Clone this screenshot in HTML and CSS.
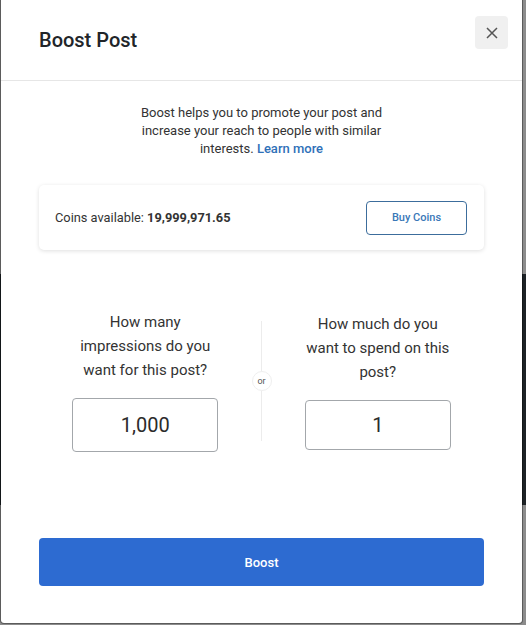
FILE: index.html
```html
<!DOCTYPE html>
<html lang="en">
<head>
<meta charset="utf-8">
<title>Boost Post</title>
<link rel="stylesheet" href="styles.css">
</head>
<body>
<div class="modal">
  <header class="modal-header">
    <h1 class="modal-title">Boost Post</h1>
    <button class="close-btn" aria-label="Close">
      <svg width="12" height="12" viewBox="0 0 12 12"><path d="M1 1 L11 11 M11 1 L1 11" stroke="#555" stroke-width="1.5" fill="none"/></svg>
    </button>
  </header>
  <div class="modal-body">
    <p class="intro">Boost helps you to promote your post and increase your reach to people with similar interests. <a href="#" class="link">Learn more</a></p>
    <div class="coins-card">
      <span class="coins-text">Coins available: <strong>19,999,971.65</strong></span>
      <button class="buy-btn">Buy Coins</button>
    </div>
    <div class="choice">
      <div class="choice-col">
        <p class="question">How many impressions do you want for this post?</p>
        <div class="amount amount-tall">1,000</div>
      </div>
      <div class="divider">
        <span class="line"></span>
        <span class="or">or</span>
        <span class="line"></span>
      </div>
      <div class="choice-col">
        <p class="question">How much do you want to spend on this post?</p>
        <div class="amount">1</div>
      </div>
    </div>
    <button class="boost-btn">Boost</button>
  </div>
</div>
</body>
</html>
```
FILE: styles.css
```css
* { box-sizing: border-box; }
html, body { margin: 0; padding: 0; }
body {
  width: 526px;
  height: 625px;
  overflow: hidden;
  font-family: Roboto, "Liberation Sans", Arial, sans-serif;
  background: linear-gradient(to bottom, #8c8c8c 0, #8c8c8c 274px, #1d2226 274px, #1d2226 505px, #8c8c8c 505px);
}
.modal {
  width: 523px;
  height: 624px;
  background: #fff;
  background-clip: padding-box;
  border: 1px solid rgba(0,0,0,0.35);
  border-top: none;
  border-radius: 0 0 4px 4px;
}
.modal-header {
  height: 81px;
  display: flex;
  justify-content: space-between;
  align-items: flex-start;
  padding: 0 14px 0 38px;
  border-bottom: 1px solid #e6e6e6;
}
.modal-title {
  margin: 28px 0 0;
  font-size: 20px;
  line-height: 24px;
  font-weight: 500;
  color: #212529;
}
.close-btn {
  margin-top: 16px;
  width: 33px;
  height: 33px;
  border: none;
  border-radius: 4px;
  background: #f0f0f0;
  display: flex;
  align-items: center;
  justify-content: center;
  padding: 0;
}
.modal-body {
  padding: 23px 38px 0;
  display: flex;
  flex-direction: column;
}
.intro {
  margin: 0 auto;
  max-width: 250px;
  text-align: center;
  font-size: 13px;
  line-height: 18px;
  color: #333;
}
.link {
  color: #2f70b8;
  font-weight: 500;
  text-decoration: none;
}
.coins-card {
  margin-top: 27px;
  height: 65px;
  display: flex;
  align-items: center;
  justify-content: space-between;
  padding: 0 16px;
  border-radius: 5px;
  background: #fff;
  box-shadow: 0 1px 4px rgba(0,0,0,0.13);
}
.coins-text {
  font-size: 12.8px;
  color: #333;
}
.coins-text strong { font-weight: 700; }
.buy-btn {
  width: 101px;
  height: 34px;
  border: 1px solid #3c6d9c;
  border-radius: 4px;
  background: #fff;
  color: #3a78b8;
  font-family: inherit;
  font-size: 11px;
  font-weight: 500;
  margin-right: 1px;
}
.choice {
  margin-top: 60px;
  display: grid;
  grid-template-columns: 1fr 20px 1fr;
  align-items: center;
}
.choice-col {
  display: flex;
  flex-direction: column;
  align-items: center;
}
.question {
  margin: 0 0 16px;
  max-width: 150px;
  text-align: center;
  font-size: 15px;
  line-height: 24px;
  color: #333;
}
.amount {
  width: 146px;
  height: 50px;
  border: 1px solid #a3a7ab;
  border-radius: 4px;
  display: flex;
  align-items: center;
  justify-content: center;
  font-size: 20px;
  color: #2b2b2b;
}
.amount-tall { height: 54px; }
.divider {
  display: flex;
  flex-direction: column;
  align-items: center;
}
.line {
  width: 1px;
  height: 50px;
  background: #ececec;
}
.or {
  width: 20px;
  height: 20px;
  border: 1px solid #efefef;
  border-radius: 50%;
  display: flex;
  align-items: center;
  justify-content: center;
  font-size: 9px;
  color: #555;
  background: #fff;
}
.boost-btn {
  margin-top: 86px;
  height: 48px;
  border: none;
  border-radius: 4px;
  background: #2d6bd1;
  color: #fff;
  font-family: inherit;
  font-size: 13px;
  font-weight: 500;
}
```
